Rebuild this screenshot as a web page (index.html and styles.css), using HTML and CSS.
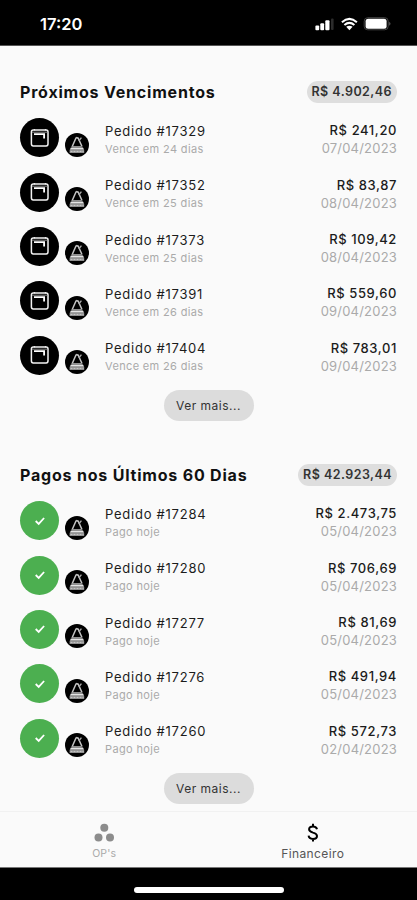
FILE: index.html
```html
<!DOCTYPE html>
<html lang="pt-BR">
<head>
<meta charset="utf-8">
<title>Financeiro</title>
<link rel="stylesheet" href="styles.css">
</head>
<body>
<svg class="defs" aria-hidden="true">
  <symbol id="calendar" viewBox="0 0 20 20">
    <path d="M4.5 1V2.4M15.5 1V2.4" stroke="#ccc" stroke-width="1.2"/>
    <rect x="1.4" y="2.1" width="16.6" height="15.8" rx="1.8" fill="none" stroke="#f2f2f2" stroke-width="1.5"/>
    <path d="M2 4.2H17.4" stroke="#888" stroke-width="1"/>
    <path d="M4 5.2H15V10.4H13.2V6.9H4Z" fill="#fff"/>
  </symbol>
  <symbol id="check" viewBox="0 0 12 12">
    <path d="M1.7 6L4.7 8.9L10.1 3" fill="none" stroke="#fff" stroke-width="1.8"/>
  </symbol>
  <symbol id="press" viewBox="0 0 24 24">
    <circle cx="12" cy="12" r="12" fill="#000"/>
    <path d="M11.2 4.5L7 14M11.2 4.5L13.2 5.2L17 13.5" fill="none" stroke="#c4c4c4" stroke-width="1.5"/>
    <path d="M13.8 8L16.4 4.6" fill="none" stroke="#aaa" stroke-width="1.3"/>
    <path d="M8 13H16.5L18.4 15L19.2 17V20H4.6V17L6 14.5Z" fill="#8f8f8f"/>
    <path d="M5.6 15.6H18.2" stroke="#e4e4e4" stroke-width="1.2"/>
    <path d="M5.5 18.4H18.5" stroke="#ccc" stroke-width="1" stroke-dasharray="2 1"/>
  </symbol>
</svg>
<div class="phone">
  <header class="status">
    <span class="clock">17:20</span>
    <svg class="indicators" width="77" height="16" viewBox="0 0 77 16">
      <g fill="#fff">
        <rect x="1.4" y="9.5" width="3.8" height="4.8" rx="1"/>
        <rect x="6.3" y="7.3" width="3.8" height="7" rx="1"/>
        <rect x="11.3" y="4.3" width="4.2" height="10" rx="1"/>
        <rect x="17" y="2.4" width="2.6" height="11.6" rx="1" fill="#2c2c2c"/>
        <path d="M35.4 14.2L32.2 10.8Q35.4 8.6 38.6 10.8Z"/>
      </g>
      <path d="M27.9 6.2Q35.4 -.4 42.9 6.2M30.4 9Q35.4 4.7 40.4 9" fill="none" stroke="#fff" stroke-width="2"/>
      <rect x="50.2" y="1.7" width="24" height="12.1" rx="3.5" fill="none" stroke="#444"/>
      <rect x="51.6" y="2.8" width="21" height="9.9" rx="2.5" fill="#fff"/>
      <path d="M75.4 5.8Q77.4 7.8 75.4 9.8Z" fill="#777"/>
    </svg>
  </header>

  <main class="content">
    <section class="group">
      <div class="heading"><h1>Próximos Vencimentos</h1><span class="total">R$ 4.902,46</span></div>
      <ul class="orders">
        <li class="order"><span class="state due"><svg><use href="#calendar"/></svg></span><svg class="press"><use href="#press"/></svg><div class="info"><p class="name">Pedido #17329</p><p class="note">Vence em 24 dias</p></div><div class="amount"><p class="value">R$ 241,20</p><p class="date">07/04/2023</p></div></li>
        <li class="order"><span class="state due"><svg><use href="#calendar"/></svg></span><svg class="press"><use href="#press"/></svg><div class="info"><p class="name">Pedido #17352</p><p class="note">Vence em 25 dias</p></div><div class="amount"><p class="value">R$ 83,87</p><p class="date">08/04/2023</p></div></li>
        <li class="order"><span class="state due"><svg><use href="#calendar"/></svg></span><svg class="press"><use href="#press"/></svg><div class="info"><p class="name">Pedido #17373</p><p class="note">Vence em 25 dias</p></div><div class="amount"><p class="value">R$ 109,42</p><p class="date">08/04/2023</p></div></li>
        <li class="order"><span class="state due"><svg><use href="#calendar"/></svg></span><svg class="press"><use href="#press"/></svg><div class="info"><p class="name">Pedido #17391</p><p class="note">Vence em 26 dias</p></div><div class="amount"><p class="value">R$ 559,60</p><p class="date">09/04/2023</p></div></li>
        <li class="order"><span class="state due"><svg><use href="#calendar"/></svg></span><svg class="press"><use href="#press"/></svg><div class="info"><p class="name">Pedido #17404</p><p class="note">Vence em 26 dias</p></div><div class="amount"><p class="value">R$ 783,01</p><p class="date">09/04/2023</p></div></li>
      </ul>
      <button class="more">Ver mais...</button>
    </section>

    <section class="group">
      <div class="heading"><h1>Pagos nos Últimos 60 Dias</h1><span class="total">R$ 42.923,44</span></div>
      <ul class="orders">
        <li class="order"><span class="state paid"><svg><use href="#check"/></svg></span><svg class="press"><use href="#press"/></svg><div class="info"><p class="name">Pedido #17284</p><p class="note">Pago hoje</p></div><div class="amount"><p class="value">R$ 2.473,75</p><p class="date">05/04/2023</p></div></li>
        <li class="order"><span class="state paid"><svg><use href="#check"/></svg></span><svg class="press"><use href="#press"/></svg><div class="info"><p class="name">Pedido #17280</p><p class="note">Pago hoje</p></div><div class="amount"><p class="value">R$ 706,69</p><p class="date">05/04/2023</p></div></li>
        <li class="order"><span class="state paid"><svg><use href="#check"/></svg></span><svg class="press"><use href="#press"/></svg><div class="info"><p class="name">Pedido #17277</p><p class="note">Pago hoje</p></div><div class="amount"><p class="value">R$ 81,69</p><p class="date">05/04/2023</p></div></li>
        <li class="order"><span class="state paid"><svg><use href="#check"/></svg></span><svg class="press"><use href="#press"/></svg><div class="info"><p class="name">Pedido #17276</p><p class="note">Pago hoje</p></div><div class="amount"><p class="value">R$ 491,94</p><p class="date">05/04/2023</p></div></li>
        <li class="order"><span class="state paid"><svg><use href="#check"/></svg></span><svg class="press"><use href="#press"/></svg><div class="info"><p class="name">Pedido #17260</p><p class="note">Pago hoje</p></div><div class="amount"><p class="value">R$ 572,73</p><p class="date">02/04/2023</p></div></li>
      </ul>
      <button class="more">Ver mais...</button>
    </section>
  </main>

  <nav class="tabs">
    <a class="tab">
      <svg width="20" height="20" viewBox="0 0 20 20" fill="#8c8c8c"><circle cx="10.3" cy="4.7" r="4"/><circle cx="4.5" cy="14.4" r="4"/><circle cx="16" cy="14.4" r="4"/></svg>
      <span>OP's</span>
    </a>
    <a class="tab active">
      <svg width="20" height="20" viewBox="0 0 20 20" fill="none" stroke="#000" stroke-width="2"><path d="M14 6.3C13.6 4.4 12.2 3.5 10 3.5C7.6 3.5 6.1 4.6 6.1 6.3C6.1 8.4 7.8 9 10 9.6C12.5 10.2 14 11 14 13C14 14.9 12.4 15.9 10 15.9C7.4 15.9 5.8 14.8 5.6 12.7M10 .8V3.8M10 15.8V18.6"/></svg>
      <span>Financeiro</span>
    </a>
  </nav>
  <footer class="home"><span class="bar"></span></footer>
</div>
</body>
</html>
```
FILE: styles.css
```css
* { box-sizing: border-box; margin: 0; padding: 0; }
body { background: #fafafa; font-family: Inter, "Liberation Sans", sans-serif; color: #1c1c1c; }
.defs { display: none; }
.phone { width: 417px; height: 900px; display: flex; flex-direction: column; overflow: hidden; }
.status { height: 46px; flex: none; background: #000; border-bottom: 1px solid #555; display: flex; justify-content: space-between; align-items: center; padding: 3px 26px 0 40px; }
.clock { color: #fff; font-size: 16.5px; font-weight: 600; letter-spacing: 0; }
.content { flex: 1; min-height: 0; padding: 34.5px 20px 0; }
.group { display: flex; flex-direction: column; height: 383px; }
.heading { height: 23px; display: flex; justify-content: space-between; align-items: center; margin-bottom: 7px; }
h1 { font-size: 16px; font-weight: 650; letter-spacing: 0.8px; color: #111; white-space: nowrap; }
.total { height: 21.5px; line-height: 22.5px; border-radius: 11px; padding: 0 5px; background: #dedede; font-size: 12.5px; font-weight: 600; letter-spacing: 0.45px; color: #333; white-space: nowrap; }
.orders { list-style: none; }
.order { height: 54.4px; display: flex; align-items: center; }
.state { width: 39px; height: 39px; border-radius: 50%; display: flex; align-items: center; justify-content: center; }
.due { background: #000; }
.due svg { width: 20px; height: 20px; }
.paid { background: #4caf50; }
.paid svg { width: 12px; height: 12px; }
.press { width: 24px; height: 24px; margin: 14px 0 0 6px; }
.info { margin-left: 16px; padding-top: 4.4px; }
.name { font-size: 13px; line-height: 18px; letter-spacing: 0.75px; }
.note { font-size: 11px; line-height: 18px; letter-spacing: 0.35px; color: #aaa; }
.amount { margin-left: auto; padding-top: 3px; text-align: right; }
.value { font-size: 13px; font-weight: 500; line-height: 18px; letter-spacing: 0.6px; }
.date { font-size: 13px; line-height: 18px; letter-spacing: 0.2px; color: #aaa; }
.more { align-self: center; width: 90px; height: 31px; margin-top: 8px; border: 0; border-radius: 16px; background: #dcdcdc; font: 12px Inter, "Liberation Sans", sans-serif; letter-spacing: 0.5px; color: #333; }
.tabs { height: 57px; flex: none; border-top: 1px solid #f1f1f1; border-bottom: 1px solid #777; display: flex; }
.tab { flex: 1; display: flex; flex-direction: column; align-items: center; padding-top: 11px; font-size: 10.5px; letter-spacing: 0.2px; color: #aaa; }
.tab span { line-height: 18px; margin-top: 2.5px; }
.tab.active { color: #555; font-size: 12px; letter-spacing: 0.4px; }
.home { height: 32.5px; flex: none; background: #000; display: flex; justify-content: center; padding-top: 19.5px; }
.bar { width: 150px; height: 6px; border-radius: 3px; background: #fff; }
```
